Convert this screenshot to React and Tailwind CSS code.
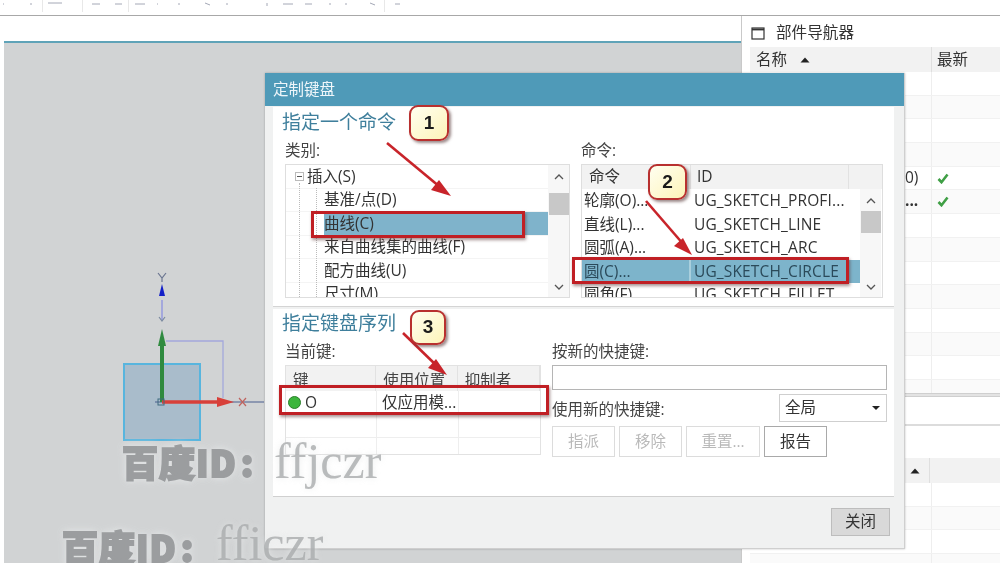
const cjk = "font-['Open_Sans','Noto_Sans_CJK_SC',sans-serif]";

const treeRows = [
  { label: "插入(S)", indent: "pl-[21px]" },
  { label: "基准/点(D)", indent: "pl-[38px]" },
  { label: "曲线(C)", indent: "pl-[38px]", selected: true },
  { label: "来自曲线集的曲线(F)", indent: "pl-[38px]" },
  { label: "配方曲线(U)", indent: "pl-[38px]" },
  { label: "尺寸(M)", indent: "pl-[38px]" },
];

const commandRows = [
  ["轮廓(O)...", "UG_SKETCH_PROFI..."],
  ["直线(L)...", "UG_SKETCH_LINE"],
  ["圆弧(A)...", "UG_SKETCH_ARC"],
  ["圆(C)...", "UG_SKETCH_CIRCLE", true],
  ["圆角(F)", "UG_SKETCH_FILLET"],
];

function Scrollbar({ thumbGap }) {
  return (
    <div className="w-[21px] shrink-0 flex flex-col items-center bg-[#f7f7f7] h-full">
      <svg width="12" height="8" viewBox="0 0 12 8" className="mt-[8px]">
        <path d="M2 6l4-4 4 4" fill="none" stroke="#555" strokeWidth="1.3" />
      </svg>
      <div className={`w-[20px] h-[22px] bg-[#c8c8c8] ${thumbGap}`} />
      <div className="flex-1" />
      <svg width="12" height="8" viewBox="0 0 12 8" className="mb-[6px]">
        <path d="M2 2l4 4 4-4" fill="none" stroke="#555" strokeWidth="1.3" />
      </svg>
    </div>
  );
}

function Callout({ n, className }) {
  return (
    <div
      className={`absolute flex items-center justify-center rounded-[9px] border-2 border-[#b8302f] bg-gradient-to-br from-[#fffff0] to-[#fdf3b8] shadow-[2px_2px_3px_rgba(90,60,60,0.6)] text-[19px] font-bold text-[#1a1a1a] font-['Liberation_Sans',sans-serif] ${className}`}
    >
      {n}
    </div>
  );
}

function RedBox({ className }) {
  return (
    <div
      className={`absolute border-[3px] border-[#c01f24] shadow-[1px_2px_3px_rgba(80,40,40,0.5)] ${className}`}
    />
  );
}

function DialogButton({ children, enabled, className }) {
  return (
    <div
      className={`h-[31px] flex items-center justify-center border text-[15.5px] ${
        enabled ? "border-[#a9a9a9] text-[#333]" : "border-[#dcdcdc] text-[#b9b9b9]"
      } ${className}`}
    >
      {children}
    </div>
  );
}

function NavRows({ count, checks = {} }) {
  return (
    <div>
      {Array.from({ length: count }).map((_, i) => (
        <div
          key={i}
          className={`h-[23.7px] flex border-b border-[#f1f1f1] ${i % 2 ? "bg-[#fafafa]" : "bg-white"}`}
        >
          <div className="w-[182px] border-r border-[#eeeeee] h-full" />
          <div className="flex-1 flex items-center pl-[5px]">
            {checks[i] && (
              <svg width="12" height="11" viewBox="0 0 12 11">
                <path d="M1.5 6l3 3.2L10.5 1.5" fill="none" stroke="#3f9f45" strokeWidth="2.6" />
              </svg>
            )}
          </div>
        </div>
      ))}
    </div>
  );
}

function Gizmo() {
  return (
    <svg width="741" height="563" viewBox="0 0 741 563" className="absolute left-0 top-0">
      <rect x="124" y="364" width="76" height="76" fill="#a9bccb" stroke="#58b5de" strokeWidth="2" />
      <path d="M166 341H223V398" fill="none" stroke="#a4a8dc" strokeWidth="1.3" />
      <path d="M162 300V320" stroke="#a4a8dc" strokeWidth="2" />
      <path d="M159 317l3 4 3-4" fill="none" stroke="#7b8aa0" strokeWidth="1.2" />
      <path d="M162 284l-3 12h6z" fill="#1420c8" />
      <path d="M158 273l4 5 4-5M162 278v4" fill="none" stroke="#6a7590" strokeWidth="1.2" />
      <path d="M155 402H264" stroke="#4a5f8d" strokeWidth="1.2" />
      <path d="M162 345V402" stroke="#2f8a3f" strokeWidth="4" />
      <path d="M162 329l-4 17h8z" fill="#2f8a3f" />
      <path d="M162 402H222" stroke="#d8403a" strokeWidth="3.5" />
      <path d="M234 402l-17-5v10z" fill="#d8403a" />
      <path d="M239 398l7 8M246 398l-7 8" stroke="#c0645f" strokeWidth="1.2" />
      <rect x="158" y="399" width="6" height="6" fill="none" stroke="#3f6a80" strokeWidth="1" />
    </svg>
  );
}

function Toolbar() {
  return (
    <div className="h-[16px] bg-white border-b border-[#a8a8a8] shrink-0 overflow-hidden">
      <svg width="400" height="15" viewBox="0 0 400 15" className="block">
        <g stroke="#e8e8e8">
          <path d="M42.5 0v12M82.5 0v12M128.5 0v12M384.5 0v12" />
        </g>
        <g stroke="#a4a8b6" strokeWidth="1">
          <path d="M3 4h1M30 4h2M48 3h14M92 4h8M115 4h7M135 4h10M157 4h1M178 4h2M205 3l5 2M226 4h2M267 3v3M283 4h10M305 4h7M330 3v2M345 4h2M370 3l5 2M395 4h5" />
        </g>
      </svg>
    </div>
  );
}

function CategoryBox() {
  return (
    <div className="relative w-[285px] h-[134px] border border-[#dedede] flex overflow-hidden bg-white">
      <div className="flex-1 min-w-0 relative">
        <div className="absolute left-[9px] top-[7px] w-[9px] h-[9px] border border-[#bbb] bg-white flex items-center justify-center z-10">
          <div className="w-[5px] h-px bg-[#555]" />
        </div>
        <div className="absolute left-[13px] top-[18px] bottom-0 border-l border-dotted border-[#bbb]" />
        <div className="absolute left-[30px] top-[23px] bottom-0 border-l border-dotted border-[#bbb]" />
        {treeRows.map((row) => (
          <div key={row.label} className={`h-[23.5px] flex items-center text-[15.5px] text-[#333] leading-none ${row.indent} border-b border-[#f4f4f4]`}>
            <span className={row.selected ? "bg-[#7fb3cb] h-full flex items-center flex-1" : ""}>{row.label}</span>
          </div>
        ))}
      </div>
      <Scrollbar thumbGap="mt-[12px]" />
    </div>
  );
}

function CommandBox() {
  return (
    <div className="w-[302px] h-[134px] border border-[#dedede] flex flex-col overflow-hidden bg-white">
      <div className="h-[24px] shrink-0 flex bg-[#f2f2f2] text-[15.5px] text-[#333] items-center">
        <div className="w-[109px] pl-[7px] border-r border-[#e2e2e2] h-full flex items-center">命令</div>
        <div className="w-[158px] pl-[6px] border-r border-[#e2e2e2] h-full flex items-center">ID</div>
      </div>
      <div className="flex flex-1 min-h-0">
        <div className="w-[278px] shrink-0">
          {commandRows.map(([name, id, selected]) => (
            <div key={id} className={`h-[23.5px] flex items-center text-[15.5px] leading-none ${selected ? "bg-[#7db4cb] text-[#2b4a5a]" : "text-[#333]"}`}>
              <div className={`w-[109px] h-full flex items-center pl-[2px] shrink-0 ${selected ? "border-r-2 border-[#a9cfdd]" : ""}`}>{name}</div>
              <div className="pl-[3px] whitespace-nowrap tracking-[0.15px]">{id}</div>
            </div>
          ))}
        </div>
        <Scrollbar thumbGap="mt-[6px]" />
      </div>
    </div>
  );
}

function KeyTable() {
  const cols = ["w-[91px]", "w-[82px]", "w-[83px]"];
  const heads = ["键", "使用位置", "抑制者"];
  return (
    <div className="w-[256px] h-[90px] border border-[#e2e2e2] overflow-hidden bg-white">
      <div className="h-[25px] flex bg-[#f2f2f2] text-[15.5px] text-[#444]">
        {heads.map((h, i) => (
          <div key={h} className={`${cols[i]} pl-[7px] border-r border-[#e2e2e2] flex items-end leading-[22px] overflow-hidden`}>
            {h}
          </div>
        ))}
      </div>
      <div className="h-[24px] flex items-center text-[15.5px] text-[#333] border-b border-[#eeeeee]">
        <div className={`${cols[0]} pl-[2px] flex items-center gap-[4px] border-r border-[#eeeeee] h-full`}>
          <span className="w-[13px] h-[13px] rounded-full bg-[#3cb53c] border border-[#2a7f2a]" />
          <span>O</span>
        </div>
        <div className={`${cols[1]} pl-[5px] border-r border-[#eeeeee] h-full flex items-center whitespace-nowrap`}>仅应用模...</div>
      </div>
      <div className="h-[23px] flex border-b border-[#eeeeee]">
        <div className={`${cols[0]} border-r border-[#eeeeee]`} />
        <div className={`${cols[1]} border-r border-[#eeeeee]`} />
      </div>
      <div className="h-[18px] flex">
        <div className={`${cols[0]} border-r border-[#eeeeee]`} />
        <div className={`${cols[1]} border-r border-[#eeeeee]`} />
      </div>
    </div>
  );
}

function Dialog() {
  return (
    <div className={`absolute left-[265px] top-[73px] w-[640px] h-[476px] bg-[#f0f1f1] border-r border-b border-[#cfcfcf] shadow-[0_0_2px_rgba(0,0,0,0.25)] flex flex-col ${cjk}`}>
      <div className="h-[33px] shrink-0 bg-[#4f9ab8] text-[#eef6fa] text-[15.5px] flex items-center pl-[8px]">定制键盘</div>
      <div className="ml-[8px] mr-[10px] mt-px h-[200px] bg-white border-b border-[#d4d4d4] pl-[9px] flex flex-col">
        <div className="h-[30px] pt-[1px] text-[19px] leading-[28px] text-[#3f7f9c]">指定一个命令</div>
        <div className="flex gap-[11px] pl-[3px] mt-[2px] text-[15.5px] text-[#444]">
          <div>
            <div className="h-[25px] leading-[22px]">类别:</div>
            <CategoryBox />
          </div>
          <div>
            <div className="h-[25px] leading-[22px]">命令:</div>
            <CommandBox />
          </div>
        </div>
      </div>
      <div className="ml-[8px] mr-[10px] mt-[2px] h-[188px] bg-white border-b border-[#d0d0d0] pl-[9px] flex flex-col">
        <div className="h-[30px] text-[19px] leading-[28px] text-[#3f7f9c]">指定键盘序列</div>
        <div className="flex gap-[11px] pl-[3px] text-[15.5px] text-[#444]">
          <div>
            <div className="h-[26px] leading-[24px]">当前键:</div>
            <KeyTable />
          </div>
          <div className="w-[335px] flex flex-col">
            <div className="h-[26px] leading-[24px]">按新的快捷键:</div>
            <div className="h-[25px] border border-[#b5b5b5] bg-white" />
            <div className="h-[31px] mt-[5px] flex justify-between">
              <span className="pt-[3px] leading-[22px]">使用新的快捷键:</span>
              <div className="w-[108px] h-[28px] -mt-[1px] border border-[#cfcfcf] flex items-center justify-between pl-[5px] pr-[5px] text-[15.5px] text-[#333]">
                全局
                <svg width="10" height="6" viewBox="0 0 10 6"><path d="M1 1h8L5 5z" fill="#222" /></svg>
              </div>
            </div>
            <div className="flex gap-[4px]">
              <DialogButton className="w-[63px]">指派</DialogButton>
              <DialogButton className="w-[63px]">移除</DialogButton>
              <DialogButton className="w-[74px]">重置...</DialogButton>
              <DialogButton enabled className="w-[63px]">报告</DialogButton>
            </div>
          </div>
        </div>
      </div>
      <div className="flex justify-end pr-[14px] pt-[11px]">
        <div className="w-[59px] h-[28px] bg-[#d9d9d9] border border-[#bdbdbd] flex items-center justify-center text-[15.5px] text-[#333]">关闭</div>
      </div>
    </div>
  );
}

function Annotations() {
  return (
    <>
      <RedBox className="left-[311px] top-[211px] w-[214px] h-[27px]" />
      <RedBox className="left-[572px] top-[257px] w-[277px] h-[27px]" />
      <RedBox className="left-[279px] top-[385px] w-[270px] h-[30px]" />
      <svg width="1000" height="563" viewBox="0 0 1000 563" className="absolute left-0 top-0 pointer-events-none">
        <g stroke="#c8242a" strokeWidth="2.6" fill="#c8242a">
          <path d="M387 143L440 187" />
          <path d="M451 196l-20-6 8-10z" stroke="none" />
          <path d="M646 201L684 245" />
          <path d="M692 255l-18-9 9-8z" stroke="none" />
          <path d="M403 333L438 367" />
          <path d="M447 375l-19-7 8-9z" stroke="none" />
        </g>
      </svg>
      <Callout n="1" className="left-[409px] top-[105px] w-[40px] h-[36px]" />
      <Callout n="2" className="left-[648px] top-[164px] w-[39px] h-[36px]" />
      <Callout n="3" className="left-[410px] top-[310px] w-[36px] h-[35px]" />
    </>
  );
}

function Watermarks() {
  const heavy = "absolute font-['Noto_Sans_CJK_SC',sans-serif] font-black tracking-[1px] text-[#9b9d9f] [-webkit-text-stroke:2px_#9b9d9f] [text-shadow:0_0_5px_#dfe1e2,0_0_8px_#dfe1e2,0_0_10px_#dfe1e2] whitespace-nowrap";
  const serif = "absolute font-['Liberation_Serif',serif] text-[#a9abad]/80 [text-shadow:0_0_6px_rgba(230,232,233,0.8)] whitespace-nowrap";
  return (
    <>
      <div className={`${heavy} left-[122px] top-[435px] text-[36px] leading-[52px]`}>
        百度ID<span className="ml-[4px]">:</span>
      </div>
      <div className={`${serif} left-[274px] top-[431px] text-[50px] leading-[60px]`}>ffjczr</div>
      <div className={`${heavy} left-[62px] top-[520px] text-[36px] leading-[52px]`}>
        百度ID<span className="ml-[4px]">:</span>
      </div>
      <div className={`${serif} left-[216px] top-[513px] text-[50px] leading-[60px]`}>fficzr</div>
    </>
  );
}

function RightPanel() {
  return (
    <div className={`w-[259px] shrink-0 border-l border-[#c9c9c9] bg-white flex flex-col overflow-hidden ${cjk}`}>
      <div className="h-[31px] shrink-0 flex items-center pl-[9px] pt-[3px] gap-[11px] text-[15.6px] text-[#333]">
        <svg width="14" height="13" viewBox="0 0 14 13">
          <rect x="1" y="1" width="12" height="11" fill="none" stroke="#333" strokeWidth="1.2" />
          <path d="M1 2.5h12" stroke="#333" strokeWidth="1.8" />
        </svg>
        部件导航器
      </div>
      <div className="pl-[8px] h-[346px] shrink-0 overflow-hidden">
        <div className="h-[25px] flex bg-[#f2f2f2] text-[15.5px] text-[#333] items-center">
          <div className="w-[182px] pl-[6px] flex items-center gap-[13px] border-r border-[#dfdfdf] h-full">
            名称
            <svg width="10" height="6" viewBox="0 0 10 6"><path d="M5 0.5L9.5 5.5H0.5z" fill="#222" /></svg>
          </div>
          <div className="pl-[5px]">最新</div>
        </div>
        <NavRows count={14} checks={{ 4: true, 5: true }} />
      </div>
      <div className="h-[4px] bg-[#e3e3e3] border-y border-[#cfcfcf] shrink-0" />
      <div className="h-[27px] shrink-0" />
      <div className="h-[2px] bg-[#dcdcdc] shrink-0" />
      <div className="h-[32px] shrink-0" />
      <div className="pl-[8px]">
        <div className="h-[25px] flex bg-[#f2f2f2] items-center">
          <div className="w-[180px] h-full border-r border-[#dfdfdf] flex items-center justify-end pr-[9px]">
            <svg width="10" height="6" viewBox="0 0 10 6"><path d="M5 0.5L9.5 5.5H0.5z" fill="#222" /></svg>
          </div>
        </div>
        <NavRows count={4} />
      </div>
    </div>
  );
}

export default function App() {
  return (
    <div className={`relative w-[1000px] h-[563px] overflow-hidden bg-white flex flex-col blur-[0.5px] ${cjk}`}>
      <Toolbar />
      <div className="flex flex-1 min-h-0">
        <div className="w-[741px] shrink-0 pl-[4px] flex flex-col">
          <div className="h-[27px] shrink-0 border-b-2 border-[#5fa3b8]" />
          <div className="flex-1 bg-[#d1d3d4]" />
        </div>
        <RightPanel />
      </div>
      <Gizmo />
      <Dialog />
      <Annotations />
      <Watermarks />
      <div className="absolute left-[905px] top-[170px] text-[15.5px] text-[#333] leading-none">0)</div>
      <div className="absolute left-[905px] top-[193px] text-[15.5px] font-bold text-[#333] leading-none">...</div>
    </div>
  );
}
